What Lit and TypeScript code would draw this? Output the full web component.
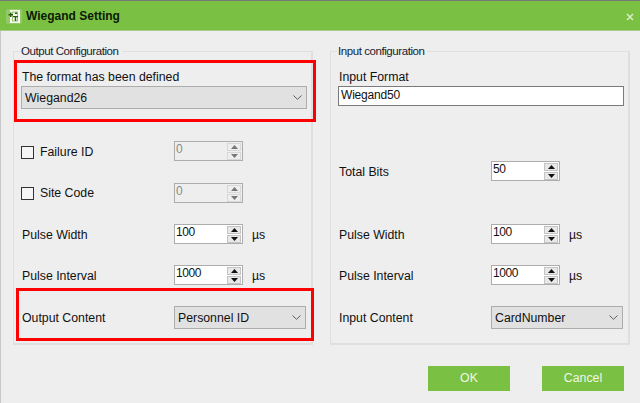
import { LitElement, html, css } from "lit";
import { customElement } from "lit/decorators.js";

const chevron = html`<svg class="chev" width="9" height="5" viewBox="0 0 9 5"><path d="M.5 .5 4.500 4.300 8.500 .5" fill="none" stroke="#5f5f5f" stroke-width="1"/></svg>`;

const spinner = (value: string, disabled = false) => html`
  <div class="spin ${disabled ? "off" : ""}">
    <span class="val">${value}</span>
    <div class="btns">
      <div class="btn"><svg width="7" height="4" viewBox="0 0 7 4"><path d="M3.5 0 7 4H0z"/></svg></div>
      <div class="btn"><svg width="7" height="4" viewBox="0 0 7 4"><path d="M0 0h7L3.500 4z"/></svg></div>
    </div>
  </div>`;

const select = (value: string, cls: string) => html`
  <div class="select ${cls}"><span>${value}</span>${chevron}</div>`;

@customElement("app-root")
export class AppRoot extends LitElement {
  static styles = css`
    :host {
      display: block;
      position: relative;
      width: 640px;
      height: 403px;
      overflow: hidden;
      background: #eeeeee;
      font: 12.3px "Liberation Sans", Arial, sans-serif;
      color: #111;
    }
    .title {
      display: flex;
      align-items: center;
      height: 29px;
      background: #7ac143;
      border-top: 1px solid #777;
      border-bottom: 1px solid #a9c98e;
      padding-left: 6px;
      gap: 4px;
      font-weight: bold;
      font-size: 12px;
      color: #0d1a08;
    }
    .title .logo { margin-top: 2px; }
    .title .x { margin-left: auto; margin-right: 6px; padding-top: 2px; display: flex; }
    .content { border-left: 1px solid #c8c8c8; height: 372px; }
    .body {
      display: grid;
      grid-template-columns: 300px 300px;
      column-gap: 17px;
      padding: 13px 0 0 12px;
    }
    fieldset {
      margin: 0;
      padding: 0 5px 0 7px;
      height: 301px;
      box-sizing: border-box;
      border: 2px solid #dfdfdf;
      border-width: 1px 2px 2px 1px;
      min-width: 0;
    }
    legend {
      padding: 0 3px 0 1px;
      margin-left: -1px;
      font-size: 11.5px;
      letter-spacing: -0.43px;
      line-height: 15px;
      color: #151c30;
    }
    .stack { display: flex; flex-direction: column; }
    .head { height: 15px; line-height: 15px; margin-top: 11px; padding-left: 1px; }
    .select {
      box-sizing: border-box;
      display: flex;
      align-items: center;
      justify-content: space-between;
      height: 23px;
      background: #e1e1e1;
      border: 1px solid #adadad;
      padding: 0 4px 0 3px;
    }
    .wide { width: 286px; margin-top: 1px; }
    .short { width: 133px; }
    .row { display: flex; align-items: center; height: 20px; margin-top: 21px; }
    .row.gap32 { margin-top: 32px; }
    .row.gap22 { margin-top: 22px; }
    .row.gap55 { margin-top: 55px; }
    .row.gap43 { margin-top: 43px; }
    .row.sel { height: 23px; }
    .label { width: 152px; padding-left: 1px; flex: none; position: relative; top: 1px; }
    .sel .label { top: 0; }
    .check { display: flex; align-items: center; gap: 6px; width: 153px; flex: none; }
    .gap32 .check { padding-top: 2px; }
    .box { box-sizing: border-box; width: 13px; height: 13px; border: 1px solid #333; background: #f5f5f5; }
    .unit { margin-left: 9px; position: relative; top: 1px; }
    .spin {
      box-sizing: border-box;
      width: 69px;
      height: 20px;
      background: #fff;
      border: 1px solid #adadad;
      display: flex;
      justify-content: space-between;
      padding-left: 1px;
      line-height: 15px;
    }
    .spin .val { font-size: 12px; letter-spacing: -0.45px; }
    .spin.off { background: #eeeeee; }
    .spin.off .val { color: #8a8a8a; }
    .btns {
      display: flex;
      flex-direction: column;
      gap: 1px;
      width: 14px;
      margin: 1px 1px 0 0;
    }
    .btn {
      background: #e8e8e8;
      border: 1px solid #c4c4c4;
      height: 7px;
      width: 12px;
      display: flex;
      align-items: center;
      justify-content: center;
    }
    .btn svg { fill: #111; }
    .off .btn { background: #eeeeee; border-color: #d8d8d8; }
    .off .btn svg { fill: #777; }
    .input {
      box-sizing: border-box;
      width: 286px;
      height: 20px;
      margin-top: 1px;
      background: #fff;
      border: 1px solid #7a7a7a;
      padding-left: 2px;
      line-height: 16px;
      font-size: 12px;
      letter-spacing: -0.2px;
    }
    .actions {
      display: flex;
      justify-content: flex-end;
      gap: 32px;
      padding: 21px 16px 0 0;
    }
    .actions div {
      width: 82px;
      height: 25px;
      background: #7ac143;
      color: #f0f7e8;
      text-align: center;
      line-height: 25px;
    }
    .mark { position: absolute; box-sizing: border-box; border: 3px solid #ff0000; }
    .m1 { left: 14px; top: 60px; width: 302px; height: 62px; }
    .m2 { left: 16px; top: 288px; width: 298px; height: 53px; }
  `;

  render() {
    return html`
      <div class="title">
        <svg class="logo" width="16" height="15" viewBox="0 0 16 15">
          <rect width="16" height="15" rx="2" fill="#94c96a"/>
          <path d="M4 1h10v13H4z" fill="#f7faf3"/>
          <path d="M6 2.500h6v10H6z" fill="#94c96a"/>
          <path d="M7 3.500h4v8H7z" fill="#f7faf3"/>
          <path d="M2.500 5h1.500v-1.500h1.500v1.500h1.500v1.500h-1.500v1.500h-1.500v-1.500h-1.500zM9 3.500h2v1.500H9zM7 7h5v1.200H10.200V12H8.800V8.200H7z" fill="#2f5a18"/>
        </svg>
        <span>Wiegand Setting</span>
        <span class="x"><svg width="8" height="8" viewBox="0 0 8 8"><path d="M1 1 7 7M7 1 1 7" stroke="#d9edc8" stroke-width="1.500"/></svg></span>
      </div>
      <div class="content">
        <div class="body">
          <fieldset>
            <legend>Output Configuration</legend>
            <div class="stack">
              <div class="head">The format has been defined</div>
              ${select("Wiegand26", "wide")}
              <div class="row gap32">
                <div class="check"><span class="box"></span><span>Failure ID</span></div>
                ${spinner("0", true)}
              </div>
              <div class="row gap22">
                <div class="check"><span class="box"></span><span>Site Code</span></div>
                ${spinner("0", true)}
              </div>
              <div class="row"><div class="label">Pulse Width</div>${spinner("100")}<span class="unit">µs</span></div>
              <div class="row"><div class="label">Pulse Interval</div>${spinner("1000")}<span class="unit">µs</span></div>
              <div class="row sel"><div class="label">Output Content</div>${select("Personnel ID", "short")}</div>
            </div>
          </fieldset>
          <fieldset>
            <legend>Input configuration</legend>
            <div class="stack">
              <div class="head">Input Format</div>
              <div class="input">Wiegand50</div>
              <div class="row gap55"><div class="label">Total Bits</div>${spinner("50")}</div>
              <div class="row gap43"><div class="label">Pulse Width</div>${spinner("100")}<span class="unit">µs</span></div>
              <div class="row"><div class="label">Pulse Interval</div>${spinner("1000")}<span class="unit">µs</span></div>
              <div class="row sel"><div class="label">Input Content</div>${select("CardNumber", "short")}</div>
            </div>
          </fieldset>
        </div>
        <div class="actions"><div>OK</div><div>Cancel</div></div>
      </div>
      <div class="mark m1"></div>
      <div class="mark m2"></div>
    `;
  }
}
